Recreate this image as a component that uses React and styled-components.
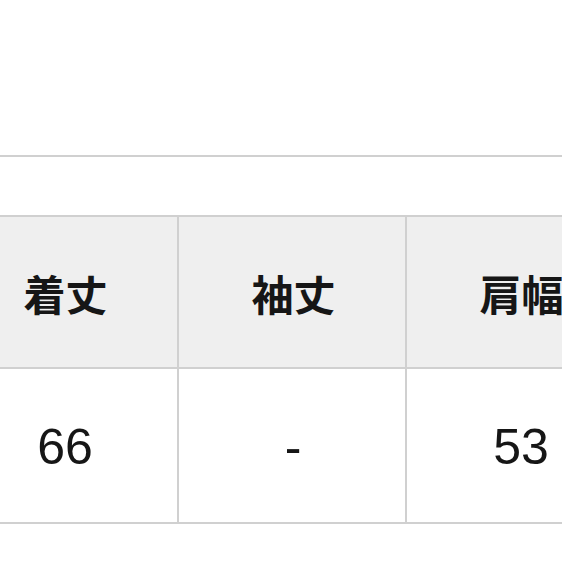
import React from 'react';
import styled, { createGlobalStyle } from 'styled-components';

const GlobalStyle = createGlobalStyle`
  html, body {
    margin: 0;
    padding: 0;
    background: #fff;
    overflow: hidden;
  }
  body {
    font-family: "Liberation Sans", "Noto Sans CJK JP", sans-serif;
    color: #1a1a1a;
  }
`

export const Page = styled.div`
  width: 562px;
  height: 562px;
  padding-top: 155px;
  box-sizing: border-box;
  overflow: hidden;
`

export const Divider = styled.div`
  height: 2px;
  background: #d0d0d0;
  margin-bottom: 58px;
`

export const SizeTable = styled.div`
  display: grid;
  grid-template-columns: repeat(3, 228px);
  margin-left: -49px;
  border-top: 2px solid #d0d0d0;
  width: max-content;
`

export const Cell = styled.div`
  display: flex;
  align-items: center;
  justify-content: center;
  box-sizing: border-box;
  height: ${p => (p.$head ? 152 : 155)}px;
  border-right: 2px solid #d0d0d0;
  border-bottom: 2px solid #d0d0d0;
  background: ${p => (p.$head ? '#efefef' : '#fff')};
  font-family: ${p => (p.$head
    ? '"Noto Sans CJK JP", "Noto Sans", sans-serif'
    : '"Liberation Sans", Arial, sans-serif')};
  font-size: ${p => (p.$head ? 42 : 50)}px;
  font-weight: ${p => (p.$head ? 700 : 400)};
  color: #161616;
  padding-left: ${p => (p.$head ? 3 : 2)}px;
  padding-top: ${p => (p.$head ? 0 : 2)}px;
`

const heads = ['着丈', '袖丈', '肩幅']
const values = ['66', '-', '53']

const App = () => {
  return (
    <>
      <GlobalStyle />
      <Page>
        <Divider />
        <SizeTable>
          {heads.map(h => <Cell $head key={h}>{h}</Cell>)}
          {values.map((v, i) => <Cell key={i}>{v}</Cell>)}
        </SizeTable>
      </Page>
    </>
  );
}

export default App;
